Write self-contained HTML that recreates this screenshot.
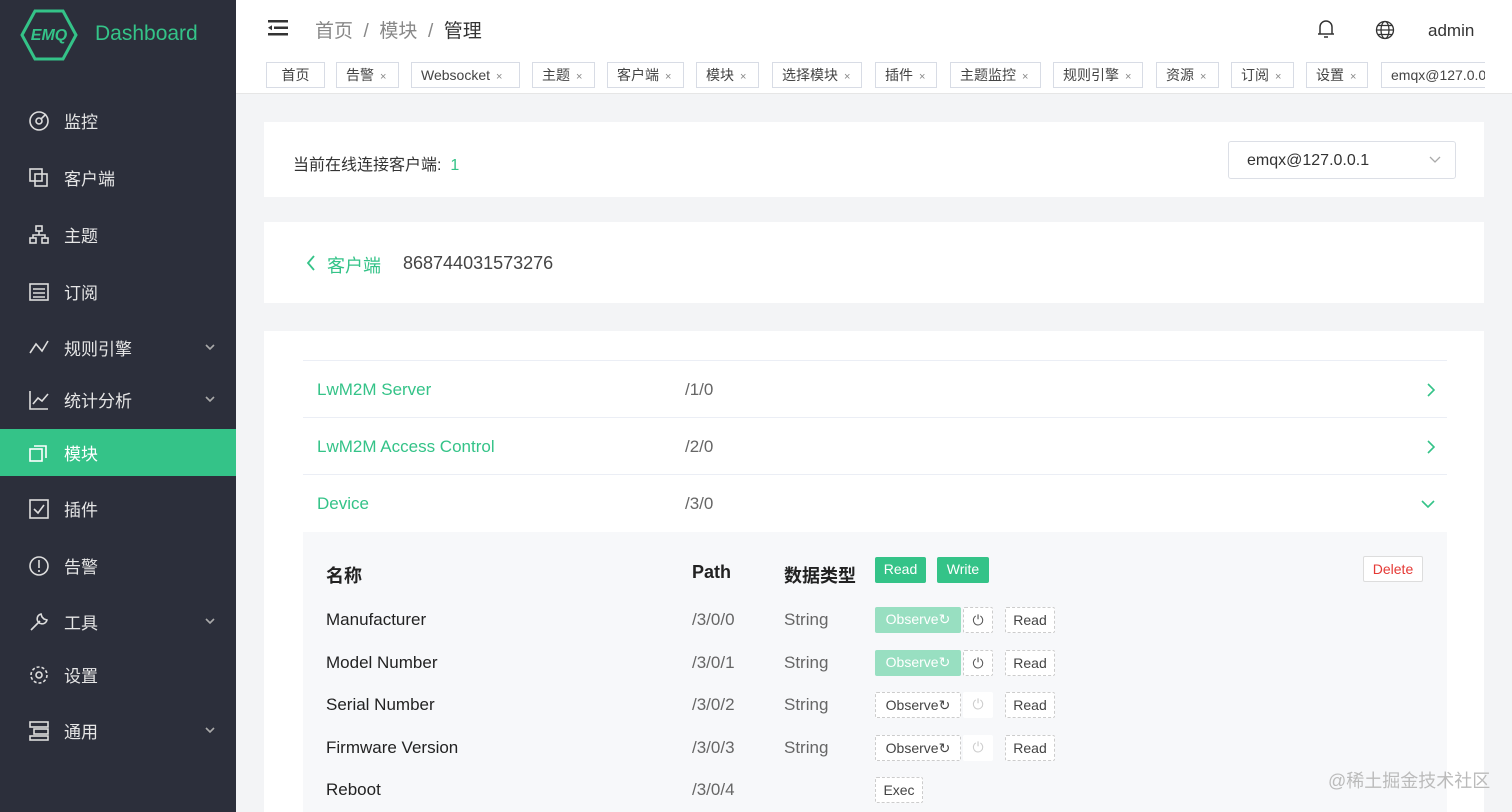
<!DOCTYPE html><html><head><meta charset="utf-8"><style>
*{box-sizing:border-box;margin:0;padding:0}
html,body{width:1512px;height:812px;overflow:hidden}
body{font-family:"Liberation Sans","Noto Sans CJK SC",sans-serif;background:#f3f4f6;position:relative;color:#333}
.side{position:absolute;left:0;top:0;width:236px;height:812px;background:#2c2f3b}
.logo{position:absolute;left:20px;top:8px}
.brand{position:absolute;left:95px;top:22px;color:#34c388;font-size:21px}
.mi{position:absolute;left:0;width:236px;height:47px;color:#e6e6e6;font-size:17px;display:flex;align-items:center;padding-left:64px}
.mi svg{position:absolute;left:28px;top:13px}
.mi .ar{position:absolute;left:204px;top:18px}
.mi.act{background:#34c388;color:#fff}
.top{position:absolute;left:236px;top:0;right:0;height:94px;background:#fff;border-bottom:1px solid #e6e6e6}
.bc{position:absolute;left:315px;top:16px;font-size:19px;color:#888}
.bc b{font-weight:normal;color:#333}
.tab{position:absolute;top:62px;height:26px;border:1px solid #d8dce5;font-size:14px;color:#444;padding:0 0 0 9px;line-height:24px;background:#fff;white-space:nowrap;overflow:hidden}
.tab i{font-style:normal;font-size:11px;color:#888;margin-left:6px}
.card{position:absolute;left:264px;width:1220px;background:#fff}
.g{color:#34c388}
.row{position:absolute;left:303px;width:1144px;height:57px;border-bottom:1px solid #ebeef5;font-size:17px}
.row .n{position:absolute;left:14px;top:19px;color:#34c388}
.row .p{position:absolute;left:382px;top:19px;color:#666}
.row svg{position:absolute;right:12px;top:22px}
.tbl{position:absolute;left:303px;top:532px;width:1144px;height:290px;background:#f7f8fa}
.t{position:absolute;font-size:17px;color:#222}
.btn{position:absolute;height:26px;font-size:14px;line-height:24px;text-align:center;border-radius:2px}
.gb{background:#34c388;color:#fff}
.ob{background:#98dfc1;color:#fff}
.db{border:1px dashed #ccc;background:#fff;color:#444}
</style></head><body>
<div class="side">
<svg class="logo" width="58" height="54" viewBox="0 0 58 54"><polygon points="15,3 43,3 56,27 43,51 15,51 2,27" fill="none" stroke="#34c388" stroke-width="3"/><text x="29" y="32" text-anchor="middle" font-family="Liberation Sans" font-style="italic" font-weight="bold" font-size="16" fill="#34c388">EMQ</text></svg>
<div class="brand">Dashboard</div>
<div class="mi" style="top:97px"><svg width="22" height="22" fill="none" stroke="#ddd" stroke-width="1.6"><circle cx="11" cy="11" r="9"/><circle cx="11" cy="11" r="3"/><path d="M13 9l5-5"/></svg>监控</div>
<div class="mi" style="top:154px"><svg width="22" height="22" fill="none" stroke="#ddd" stroke-width="1.6"><rect x="2" y="2" width="12" height="12"/><rect x="7" y="7" width="12" height="12"/></svg>客户端</div>
<div class="mi" style="top:211px"><svg width="22" height="22" fill="none" stroke="#ddd" stroke-width="1.6"><rect x="8" y="2" width="6" height="5"/><rect x="2" y="14" width="6" height="5"/><rect x="14" y="14" width="6" height="5"/><path d="M11 7v4M5 14v-3h12v3"/></svg>主题</div>
<div class="mi" style="top:268px"><svg width="22" height="22" fill="none" stroke="#ddd" stroke-width="1.6"><rect x="2" y="3" width="18" height="16"/><path d="M5 8h12M5 12h12M5 16h12"/></svg>订阅</div>
<div class="mi" style="top:324px"><svg width="22" height="22" fill="none" stroke="#ddd" stroke-width="1.6"><path d="M2 16l6-9 6 7 6-10"/></svg>规则引擎<svg class="ar" width="12" height="10" fill="none" stroke="#aaa" stroke-width="1.6"><path d="M2 3l4 4 4-4"/></svg></div>
<div class="mi" style="top:376px"><svg width="22" height="22" fill="none" stroke="#ddd" stroke-width="1.6"><path d="M2 2v18h18M5 15l5-6 4 3 6-7"/></svg>统计分析<svg class="ar" width="12" height="10" fill="none" stroke="#aaa" stroke-width="1.6"><path d="M2 3l4 4 4-4"/></svg></div>
<div class="mi act" style="top:429px"><svg width="22" height="22" fill="none" stroke="#fff" stroke-width="1.6"><rect x="2" y="7" width="12" height="12"/><path d="M6 4h12v12"/></svg>模块</div>
<div class="mi" style="top:485px"><svg width="22" height="22" fill="none" stroke="#ddd" stroke-width="1.6"><rect x="2" y="2" width="18" height="18"/><path d="M6 11l4 4 6-8"/></svg>插件</div>
<div class="mi" style="top:542px"><svg width="22" height="22" fill="none" stroke="#ddd" stroke-width="1.6"><circle cx="11" cy="11" r="9"/><path d="M11 5v8M11 15v2"/></svg>告警</div>
<div class="mi" style="top:598px"><svg width="22" height="22" fill="none" stroke="#ddd" stroke-width="1.6"><path d="M3 19l9-9M13 3a5 5 0 1 0 6 6l-3-1-2-2z"/></svg>工具<svg class="ar" width="12" height="10" fill="none" stroke="#aaa" stroke-width="1.6"><path d="M2 3l4 4 4-4"/></svg></div>
<div class="mi" style="top:651px"><svg width="22" height="22" fill="none" stroke="#ddd" stroke-width="1.6"><circle cx="11" cy="11" r="8" stroke-dasharray="3 2"/><circle cx="11" cy="11" r="3"/></svg>设置</div>
<div class="mi" style="top:707px"><svg width="22" height="22" fill="none" stroke="#ddd" stroke-width="1.6"><rect x="2" y="2" width="18" height="5"/><rect x="6" y="9" width="14" height="5"/><rect x="2" y="16" width="18" height="4"/></svg>通用<svg class="ar" width="12" height="10" fill="none" stroke="#aaa" stroke-width="1.6"><path d="M2 3l4 4 4-4"/></svg></div>
</div>
<div class="top">
<svg style="position:absolute;left:32px;top:20px" width="20" height="16" fill="#333"><rect x="0" y="0" width="20" height="2.5"/><rect x="6" y="6.5" width="14" height="2.5"/><rect x="0" y="13" width="20" height="2.5"/><path d="M0 7.7l4-2.5v5z"/></svg>
<svg style="position:absolute;left:1080px;top:18px" width="20" height="22" fill="none" stroke="#333" stroke-width="1.5"><path d="M4 16V9a6 6 0 0 1 12 0v7zM2 16h16M8 19h4"/></svg>
<svg style="position:absolute;left:1139px;top:20px" width="20" height="20" fill="none" stroke="#333" stroke-width="1.3"><circle cx="10" cy="10" r="8.5"/><ellipse cx="10" cy="10" rx="4" ry="8.5"/><path d="M1.5 10h17M3 5.5h14M3 14.5h14"/></svg>
<div style="position:absolute;left:1192px;top:21px;font-size:17px">admin</div>
</div>
<div class="bc">首页 &nbsp;/&nbsp; 模块 &nbsp;/&nbsp; <b>管理</b></div>
<div class="tab" style="left:266px;width:59px;padding:0;text-align:center">首页</div>
<div class="tab" style="left:336px;width:63px">告警<i>×</i></div>
<div class="tab" style="left:411px;width:109px">Websocket<i>×</i></div>
<div class="tab" style="left:532px;width:63px">主题<i>×</i></div>
<div class="tab" style="left:607px;width:77px">客户端<i>×</i></div>
<div class="tab" style="left:696px;width:63px">模块<i>×</i></div>
<div class="tab" style="left:772px;width:90px">选择模块<i>×</i></div>
<div class="tab" style="left:875px;width:62px">插件<i>×</i></div>
<div class="tab" style="left:950px;width:91px">主题监控<i>×</i></div>
<div class="tab" style="left:1053px;width:90px">规则引擎<i>×</i></div>
<div class="tab" style="left:1156px;width:63px">资源<i>×</i></div>
<div class="tab" style="left:1231px;width:63px">订阅<i>×</i></div>
<div class="tab" style="left:1306px;width:62px">设置<i>×</i></div>
<div class="tab" style="left:1381px;width:104px;border-right:none">emqx@127.0.0.1</div>
<div class="card" style="top:122px;height:75px">
<div style="position:absolute;left:29px;top:29px;font-size:16px">当前在线连接客户端: <span class="g">&nbsp;1</span></div>
<div style="position:absolute;left:964px;top:19px;width:228px;height:38px;border:1px solid #dcdfe6;border-radius:3px;font-size:16px;padding:10px 18px;color:#333">emqx@127.0.0.1<svg style="position:absolute;right:14px;top:14px" width="12" height="8" fill="none" stroke="#aaa" stroke-width="1.3"><path d="M1 1l5 5 5-5"/></svg></div>
</div>
<div class="card" style="top:222px;height:81px">
<svg style="position:absolute;left:42px;top:33px" width="10" height="16" fill="none" stroke="#34c388" stroke-width="1.8"><path d="M8 1L2 8l6 7"/></svg>
<div style="position:absolute;left:63px;top:30px;font-size:18px" class="g">客户端</div>
<div style="position:absolute;left:139px;top:31px;font-size:18px;color:#444">868744031573276</div>
</div>
<div class="card" style="top:331px;height:481px"></div>
<div style="position:absolute;left:303px;top:360px;width:1144px;border-top:1px solid #ebeef5"></div>
<div class="row" style="top:361px"><span class="n">LwM2M Server</span><span class="p">/1/0</span><svg width="8" height="14" fill="none" stroke="#34c388" stroke-width="1.6"><path d="M1 1l6 6-6 6"/></svg></div>
<div class="row" style="top:418px"><span class="n">LwM2M Access Control</span><span class="p">/2/0</span><svg width="8" height="14" fill="none" stroke="#34c388" stroke-width="1.6"><path d="M1 1l6 6-6 6"/></svg></div>
<div class="row" style="top:475px;border:none"><span class="n">Device</span><span class="p">/3/0</span><svg width="14" height="8" style="top:25px" fill="none" stroke="#34c388" stroke-width="1.6"><path d="M1 1l6 6 6-6"/></svg></div>
<div class="tbl" style="height:280px"></div>
<div class="t" style="left:326px;top:562px;font-size:18px;font-weight:bold">名称</div>
<div class="t" style="left:692px;top:562px;font-size:18px;font-weight:bold">Path</div>
<div class="t" style="left:784px;top:562px;font-size:18px;font-weight:bold">数据类型</div>
<div class="btn gb" style="left:875px;top:557px;width:51px">Read</div>
<div class="btn gb" style="left:937px;top:557px;width:52px">Write</div>
<div class="btn" style="left:1363px;top:556px;width:60px;border:1px solid #ddd;background:#fff;color:#e53935">Delete</div>
<div class="t" style="left:326px;top:610px">Manufacturer</div><div class="t" style="left:692px;top:610px;color:#666">/3/0/0</div><div class="t" style="left:784px;top:610px;color:#666">String</div>
<div class="t" style="left:326px;top:653px">Model Number</div><div class="t" style="left:692px;top:653px;color:#666">/3/0/1</div><div class="t" style="left:784px;top:653px;color:#666">String</div>
<div class="t" style="left:326px;top:695px">Serial Number</div><div class="t" style="left:692px;top:695px;color:#666">/3/0/2</div><div class="t" style="left:784px;top:695px;color:#666">String</div>
<div class="t" style="left:326px;top:738px">Firmware Version</div><div class="t" style="left:692px;top:738px;color:#666">/3/0/3</div><div class="t" style="left:784px;top:738px;color:#666">String</div>
<div class="t" style="left:326px;top:780px">Reboot</div><div class="t" style="left:692px;top:780px;color:#666">/3/0/4</div>
<div class="btn ob" style="left:875px;top:607px;width:86px">Observe↻</div><div class="btn db" style="left:963px;top:607px;width:30px;color:#555">⏻</div><div class="btn db" style="left:1005px;top:607px;width:50px">Read</div>
<div class="btn ob" style="left:875px;top:650px;width:86px">Observe↻</div><div class="btn db" style="left:963px;top:650px;width:30px;color:#555">⏻</div><div class="btn db" style="left:1005px;top:650px;width:50px">Read</div>
<div class="btn db" style="left:875px;top:692px;width:86px">Observe↻</div><div class="btn" style="left:963px;top:692px;width:30px;background:#fff;color:#ccc">⏻</div><div class="btn db" style="left:1005px;top:692px;width:50px">Read</div>
<div class="btn db" style="left:875px;top:735px;width:86px">Observe↻</div><div class="btn" style="left:963px;top:735px;width:30px;background:#fff;color:#ccc">⏻</div><div class="btn db" style="left:1005px;top:735px;width:50px">Read</div>
<div class="btn db" style="left:875px;top:777px;width:48px">Exec</div>
<div style="position:absolute;left:1328px;top:767px;font-size:18px;color:#bbb">@稀土掘金技术社区</div>
</body></html>
